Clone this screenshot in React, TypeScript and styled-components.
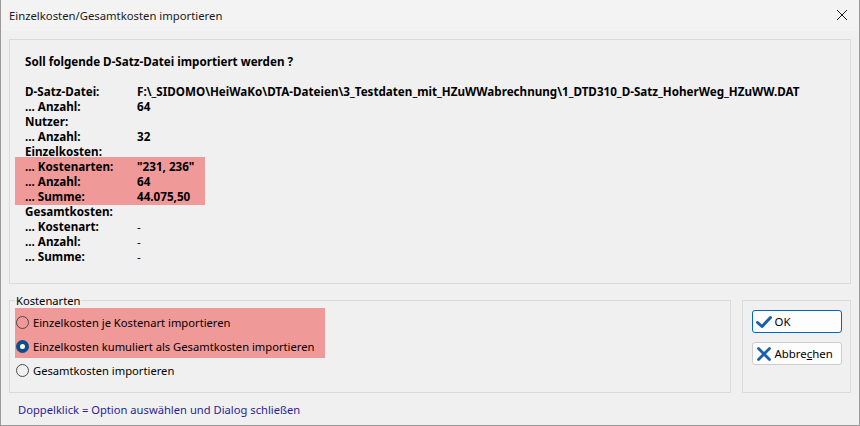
import React from "react";
import styled, { createGlobalStyle } from "styled-components";

const Global = createGlobalStyle`
  html, body { margin: 0; padding: 0; background: #f0f0f0; }
  body { font-family: "Noto Sans", "Segoe UI", Arial, sans-serif; font-size: 11.2px; color: #000; }
  * { box-sizing: border-box; }
`;

const Window = styled.div`
  width: 860px;
  height: 426px;
  border: 1px solid #9a9a9a;
  border-top: none;
  background: #f0f0f0;
  display: flex;
  flex-direction: column;
`;

const TitleBar = styled.div`
  height: 31px;
  flex: none;
  background: #f3f3f3;
  display: flex;
  align-items: center;
  justify-content: space-between;
  padding: 0 9px 1px 8px;
`;

const Title = styled.span`
  font-size: 11.3px;
  color: #1a1a1a;
`;

const CloseBtn = styled.span`
  width: 12px;
  height: 12px;
  margin-right: 2px;
  display: flex;
`;

const Body = styled.div`
  flex: 1;
  display: flex;
  flex-direction: column;
  padding: 8px 8px 0 8px;
`;

const InfoPanel = styled.div`
  height: 245px;
  flex: none;
  border: 1px solid #dadada;
  padding: 14px 0 0 15px;
  font-size: 11.65px;
`;

const Heading = styled.div`
  font-weight: 700;
  line-height: 15px;
  margin-bottom: 15px;
`;

const Grid = styled.div`
  display: grid;
  grid-template-columns: 112px auto;
  grid-auto-rows: 15px;
  line-height: 15px;
  font-weight: 700;
`;

const Mark = styled.div<{ $w: number }>`
  grid-column: 1 / -1;
  grid-row: span 3;
  display: grid;
  grid-template-columns: 112px auto;
  grid-auto-rows: 15px;
  background: #f09999;
  width: ${(p) => p.$w}px;
  margin: -2px 0 -1px -10px;
  padding: 2px 0 1px 10px;
`;

const Label = styled.span``;
const Value = styled.span<{ $plain?: boolean }>`
  font-weight: ${(p) => (p.$plain ? 400 : 700)};
  white-space: nowrap;
`;

const BottomRow = styled.div`
  display: flex;
  align-items: flex-start;
  gap: 11px;
  margin-top: 9px;
`;

const Group = styled.fieldset`
  margin: 0;
  width: 722px;
  height: 100px;
  border: 1px solid #dadada;
  padding: 0 0 0 5px;
  min-inline-size: 0;
`;

const Legend = styled.legend`
  padding: 0 1px;
  margin-left: 0;
  line-height: 15px;
`;

const Mark2 = styled.div`
  background: #f09999;
  width: 310px;
  padding-top: 2px;
`;

const Option = styled.label`
  display: flex;
  align-items: center;
  height: 24px;
  gap: 4px;
  padding-left: 1px;
  white-space: nowrap;
`;

const Radio = styled.span<{ $on?: boolean }>`
  width: 13px;
  height: 13px;
  border-radius: 50%;
  flex: none;
  border: ${(p) => (p.$on ? "none" : "1px solid #4a4a4a")};
  background: ${(p) => (p.$on ? "#0f4c8a" : "transparent")};
  display: flex;
  align-items: center;
  justify-content: center;
  &::after {
    content: "";
    display: ${(p) => (p.$on ? "block" : "none")};
    width: 5px;
    height: 5px;
    border-radius: 50%;
    background: #fff;
  }
`;

const ButtonBox = styled.div`
  width: 109px;
  height: 93px;
  margin-top: 7px;
  border: 1px solid #dadada;
  display: flex;
  flex-direction: column;
  align-items: center;
  gap: 9px;
  padding-top: 9px;
`;

const Button = styled.button<{ $primary?: boolean }>`
  width: 90px;
  height: 23px;
  border-radius: 3px;
  background: #fdfdfd;
  border: 1px solid ${(p) => (p.$primary ? "#0067c0" : "#cccccc")};
  display: flex;
  align-items: center;
  gap: 3px;
  padding: 0 0 0 3px;
  font-family: inherit;
  font-size: 11.4px;
  color: #000;
`;

const Under = styled.span`
  text-decoration: underline;
`;

const Footer = styled.div`
  color: #2d1b96;
  line-height: 15px;
  padding: 9px 0 0 9px;
`;

const CheckIcon = () => (
  <svg width="16" height="14" viewBox="0 0 16 14">
    <path d="M1.5 7.5 L6 11.5 L14.5 2.5" fill="none" stroke="#1a5eb0" strokeWidth="3" strokeLinecap="round" strokeLinejoin="round" />
  </svg>
);

const CrossIcon = () => (
  <svg width="16" height="14" viewBox="0 0 16 14">
    <path d="M2.5 1.5 L13.5 12.5 M13.5 1.5 L2.5 12.5" fill="none" stroke="#1a5eb0" strokeWidth="2.8" strokeLinecap="round" />
  </svg>
);

const CloseIcon = () => (
  <svg width="12" height="12" viewBox="0 0 12 12">
    <path d="M1 1 L11 11 M11 1 L1 11" stroke="#1a1a1a" strokeWidth="1" />
  </svg>
);

export default function App() {
  return (
    <>
      <Global />
      <Window>
        <TitleBar>
          <Title>Einzelkosten/Gesamtkosten importieren</Title>
          <CloseBtn>
            <CloseIcon />
          </CloseBtn>
        </TitleBar>
        <Body>
          <InfoPanel>
            <Heading>Soll folgende D-Satz-Datei importiert werden ?</Heading>
            <Grid>
              <Label>D-Satz-Datei:</Label>
              <Value>F:\_SIDOMO\HeiWaKo\DTA-Dateien\3_Testdaten_mit_HZuWWabrechnung\1_DTD310_D-Satz_HoherWeg_HZuWW.DAT</Value>
              <Label>... Anzahl:</Label>
              <Value>64</Value>
              <Label>Nutzer:</Label>
              <Value />
              <Label>... Anzahl:</Label>
              <Value>32</Value>
              <Label>Einzelkosten:</Label>
              <Value />
              <Mark $w={190}>
                <Label>... Kostenarten:</Label>
                <Value>"231, 236"</Value>
                <Label>... Anzahl:</Label>
                <Value>64</Value>
                <Label>... Summe:</Label>
                <Value>44.075,50</Value>
              </Mark>
              <Label>Gesamtkosten:</Label>
              <Value />
              <Label>... Kostenart:</Label>
              <Value $plain>-</Value>
              <Label>... Anzahl:</Label>
              <Value $plain>-</Value>
              <Label>... Summe:</Label>
              <Value $plain>-</Value>
            </Grid>
          </InfoPanel>
          <BottomRow>
            <Group>
              <Legend>Kostenarten</Legend>
              <Mark2>
                <Option>
                  <Radio />
                  Einzelkosten je Kostenart importieren
                </Option>
                <Option>
                  <Radio $on />
                  Einzelkosten kumuliert als Gesamtkosten importieren
                </Option>
              </Mark2>
              <Option>
                <Radio />
                Gesamtkosten importieren
              </Option>
            </Group>
            <ButtonBox>
              <Button $primary>
                <CheckIcon />
                OK
              </Button>
              <Button>
                <CrossIcon />
                <span>
                  Abbre<Under>c</Under>hen
                </span>
              </Button>
            </ButtonBox>
          </BottomRow>
          <Footer>Doppelklick = Option auswählen und Dialog schließen</Footer>
        </Body>
      </Window>
    </>
  );
}
